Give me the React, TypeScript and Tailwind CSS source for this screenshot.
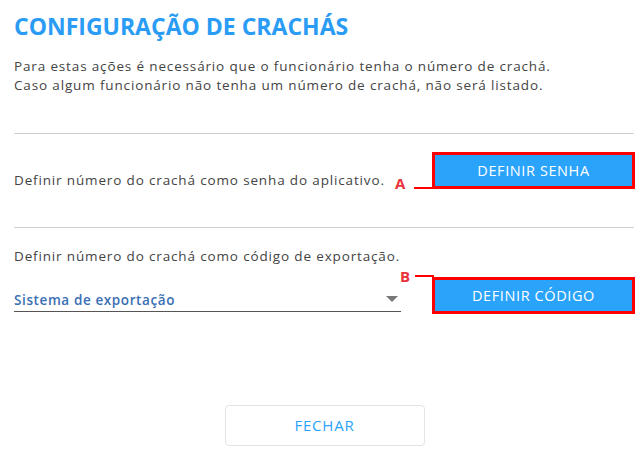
import { useState } from "react";

const font = "font-['Open_Sans',sans-serif]";

function ActionButton({ label }: { label: string }) {
  return (
    <button
      type="button"
      className="w-[203px] h-[37px] border-[3px] border-[#ff0000] bg-[#2aa3fb] text-white text-[14.5px] tracking-[0.6px]"
    >
      {label}
    </button>
  );
}

export default function App() {
  const [system, setSystem] = useState("");

  return (
    <div className={`relative w-[639px] h-[458px] bg-white pl-[14px] pr-[4px] text-[#444] ${font}`}>
      <h1 className="pt-[11px] text-[23px] leading-[30px] font-bold text-[#2b9cf5]">
        CONFIGURAÇÃO DE CRACHÁS
      </h1>

      <p className="mt-[16px] text-[13.5px] leading-[19px] tracking-[0.85px]">
        Para estas ações é necessário que o funcionário tenha o número de crachá.
        <br />
        Caso algum funcionário não tenha um número de crachá, não será listado.
      </p>

      <div className="mt-[38px] mr-[1px] border-t border-[#cfcfcf]" />

      {/* senha do aplicativo */}
      <div className="relative mt-[18px] flex items-end justify-between">
        <span className="mb-[-1px] text-[13.5px] leading-[19px] tracking-[0.85px]">
          Definir número do crachá como senha do aplicativo.
        </span>
        <ActionButton label="DEFINIR SENHA" />
        <span className="absolute left-[381px] top-[23px] text-[15px] font-bold leading-[16px] text-[#e8323c]">
          A
        </span>
        <span className="absolute left-[400px] top-[35px] w-[19px] h-[2px] bg-[#ff0000]" />
      </div>

      <div className="mt-[38px] mr-[1px] border-t border-[#cfcfcf]" />

      {/* código de exportação */}
      <p className="mt-[19px] text-[13.5px] leading-[19px] tracking-[0.85px]">
        Definir número do crachá como código de exportação.
      </p>

      <div className="relative mt-[11px] flex items-end justify-between">
        <label className="relative mb-[2px] w-[387px] border-b border-[#555] flex items-center">
          <select
            value={system}
            onChange={(e) => setSystem(e.target.value)}
            className="w-full appearance-none bg-transparent pt-[2px] pb-[1px] text-[13.5px] font-semibold text-[#3a6fb5] tracking-[0.6px] outline-none"
          >
            <option value="">Sistema de exportação</option>
          </select>
          <svg className="pointer-events-none absolute right-[3px] top-[8px]" width="12" height="6" viewBox="0 0 12 6">
            <path d="M0 0h12L6 6z" fill="#777" />
          </svg>
        </label>
        <ActionButton label="DEFINIR CÓDIGO" />
        <span className="absolute left-[386px] top-[-9px] text-[15px] font-bold leading-[16px] text-[#e8323c]">
          B
        </span>
        <span className="absolute left-[401px] top-[-2px] w-[19px] h-[2px] bg-[#ff0000]" />
      </div>

      <div className="mt-[91px] flex justify-center">
        <button
          type="button"
          className="w-[200px] h-[41px] rounded-[4px] border border-[#e3e3e3] bg-white text-[15px] text-[#2aa3fb] tracking-[0.8px]"
        >
          FECHAR
        </button>
      </div>
    </div>
  );
}
